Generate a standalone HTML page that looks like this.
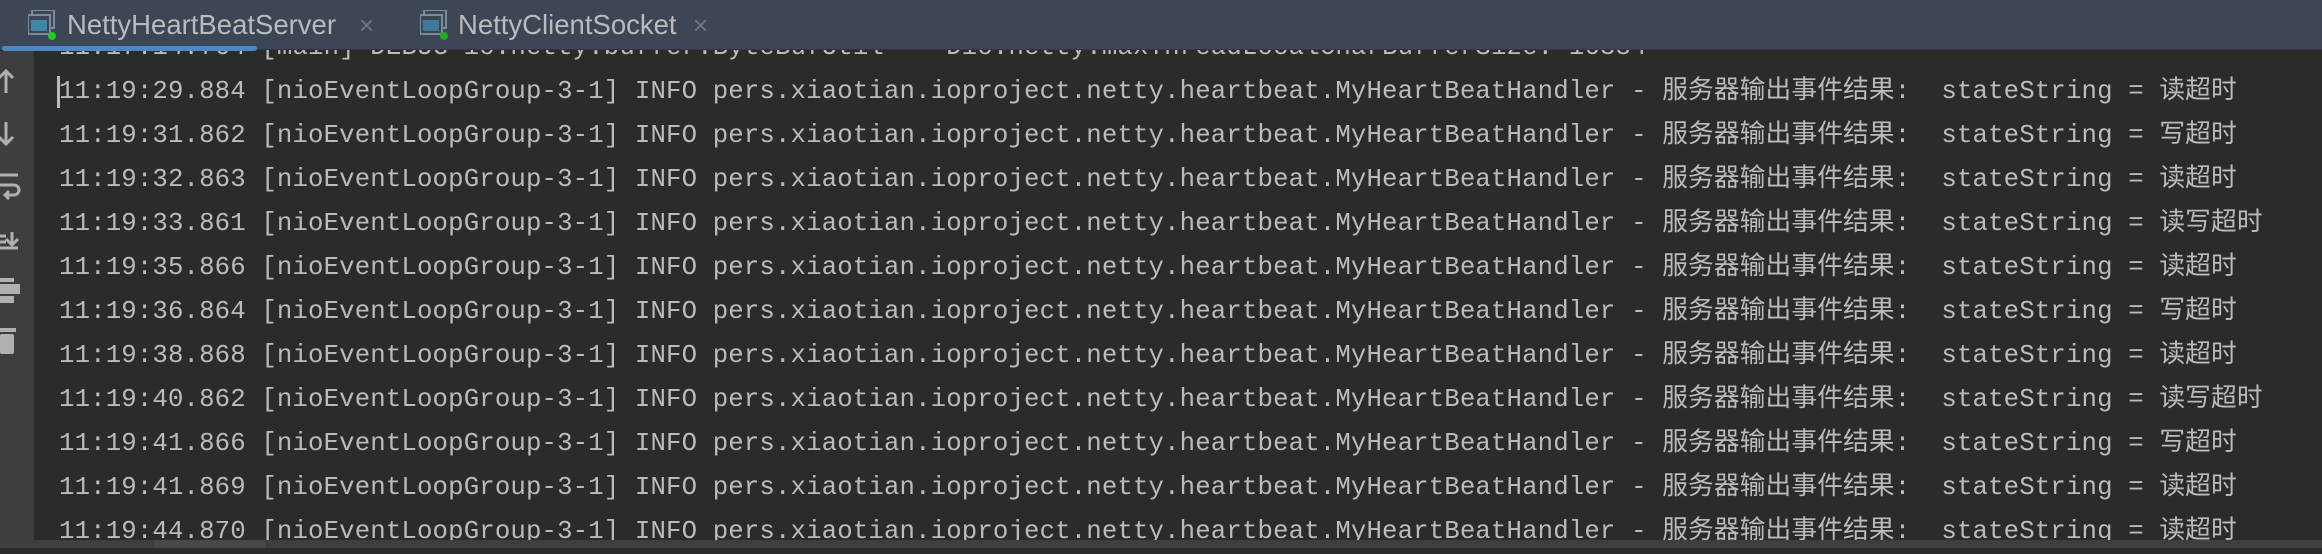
<!DOCTYPE html>
<html><head><meta charset="utf-8"><style>
*{margin:0;padding:0;box-sizing:border-box}
body{width:2322px;height:548px;background:#2b2b2b;overflow:hidden;position:relative;font-family:"Liberation Mono","Noto Sans CJK SC",monospace}
.tabs{position:absolute;left:0;top:0;width:2322px;height:50px;background:#3c4655;border-bottom:1px solid #323841}
.tab{position:absolute;top:0;height:50px;font-family:"Liberation Sans",sans-serif;font-size:27.5px;color:#bbbbbb;line-height:50px}
.x{position:absolute;top:0;color:#6e7681;font-size:26px;font-family:"Liberation Sans",sans-serif;line-height:50px}
.ul{position:absolute;left:2px;top:46px;width:255px;height:5px;background:#4a88c7;border-radius:3px}
.gut{position:absolute;left:0;top:51px;width:34px;height:489px;background:#3c3f41;border-right:1px solid #353739}
.line{position:absolute;left:59px;font-size:25.7px;letter-spacing:0.15px;color:#bbbbbb;white-space:pre;height:44px;line-height:44px}
.sb{position:absolute;left:0;top:540px;width:2322px;height:8px;background:#3c3f41}
</style></head><body>
<div class="line" style="top:26px">11:17:14.764 [main] DEBUG io.netty.buffer.ByteBufUtil - -Dio.netty.maxThreadLocalCharBufferSize: 16384</div>
<div class="tabs">
<svg style="position:absolute;left:28px;top:10px" width="30" height="30" viewBox="0 0 30 30"><rect x="4" y="0" width="22" height="18" fill="none" stroke="#7f8b99" stroke-width="2"/><rect x="0" y="5" width="22" height="19" fill="#3c4655" stroke="#7f8b99" stroke-width="2"/><rect x="3" y="10" width="16" height="11" fill="#3f86a8"/><circle cx="24" cy="26" r="4" fill="#22cc22"/></svg>
<div class="tab" style="left:67px">NettyHeartBeatServer</div>
<div class="x" style="left:359px">×</div>
<svg style="position:absolute;left:420px;top:10px" width="30" height="30" viewBox="0 0 30 30"><rect x="4" y="0" width="22" height="18" fill="none" stroke="#7f8b99" stroke-width="2"/><rect x="0" y="5" width="22" height="19" fill="#3c4655" stroke="#7f8b99" stroke-width="2"/><rect x="3" y="10" width="16" height="11" fill="#3f7a96"/><circle cx="24" cy="26" r="4" fill="#22aa22"/></svg>
<div class="tab" style="left:458px">NettyClientSocket</div>
<div class="x" style="left:693px">×</div>
<div class="ul"></div>
</div>
<div class="gut">
<svg width="34" height="489" viewBox="0 51 34 438" style="position:absolute;left:0;top:0;height:489px" preserveAspectRatio="xMinYMin">
<g stroke="#aeb1b4" stroke-width="3" fill="none">
<path d="M6 93V71M-1 78L6 71L13 78"/>
<path d="M6 122V144M-1 137L6 144L13 137"/>
<path d="M0 175H18M0 185H14a5 5 0 0 1 0 10H6M9 191l-4 4 4 4"/>
<path d="M0 236H6M0 242H6M12 232V245M6 239l6 6 6-6M0 248H18"/>
</g>
<g fill="#aeb1b4"><rect x="0" y="278" width="14" height="4"/><rect x="0" y="284" width="20" height="10"/><rect x="0" y="296" width="14" height="7"/><rect x="0" y="328" width="16" height="4"/><rect x="0" y="334" width="14" height="20" rx="2"/></g>
</svg>
</div>
<div style="position:absolute;left:57px;top:76px;width:3px;height:32px;background:#bbb"></div>
<div class="line" style="top:70px">11:19:29.884 [nioEventLoopGroup-3-1] INFO pers.xiaotian.ioproject.netty.heartbeat.MyHeartBeatHandler - 服务器输出事件结果:  stateString = 读超时</div>
<div class="line" style="top:114px">11:19:31.862 [nioEventLoopGroup-3-1] INFO pers.xiaotian.ioproject.netty.heartbeat.MyHeartBeatHandler - 服务器输出事件结果:  stateString = 写超时</div>
<div class="line" style="top:158px">11:19:32.863 [nioEventLoopGroup-3-1] INFO pers.xiaotian.ioproject.netty.heartbeat.MyHeartBeatHandler - 服务器输出事件结果:  stateString = 读超时</div>
<div class="line" style="top:202px">11:19:33.861 [nioEventLoopGroup-3-1] INFO pers.xiaotian.ioproject.netty.heartbeat.MyHeartBeatHandler - 服务器输出事件结果:  stateString = 读写超时</div>
<div class="line" style="top:246px">11:19:35.866 [nioEventLoopGroup-3-1] INFO pers.xiaotian.ioproject.netty.heartbeat.MyHeartBeatHandler - 服务器输出事件结果:  stateString = 读超时</div>
<div class="line" style="top:290px">11:19:36.864 [nioEventLoopGroup-3-1] INFO pers.xiaotian.ioproject.netty.heartbeat.MyHeartBeatHandler - 服务器输出事件结果:  stateString = 写超时</div>
<div class="line" style="top:334px">11:19:38.868 [nioEventLoopGroup-3-1] INFO pers.xiaotian.ioproject.netty.heartbeat.MyHeartBeatHandler - 服务器输出事件结果:  stateString = 读超时</div>
<div class="line" style="top:378px">11:19:40.862 [nioEventLoopGroup-3-1] INFO pers.xiaotian.ioproject.netty.heartbeat.MyHeartBeatHandler - 服务器输出事件结果:  stateString = 读写超时</div>
<div class="line" style="top:422px">11:19:41.866 [nioEventLoopGroup-3-1] INFO pers.xiaotian.ioproject.netty.heartbeat.MyHeartBeatHandler - 服务器输出事件结果:  stateString = 写超时</div>
<div class="line" style="top:466px">11:19:41.869 [nioEventLoopGroup-3-1] INFO pers.xiaotian.ioproject.netty.heartbeat.MyHeartBeatHandler - 服务器输出事件结果:  stateString = 读超时</div>
<div class="line" style="top:510px">11:19:44.870 [nioEventLoopGroup-3-1] INFO pers.xiaotian.ioproject.netty.heartbeat.MyHeartBeatHandler - 服务器输出事件结果:  stateString = 读超时</div>
<div class="sb"><div style="position:absolute;left:155px;top:0;width:110px;height:8px;background:#45494c"></div></div>
</body></html>
